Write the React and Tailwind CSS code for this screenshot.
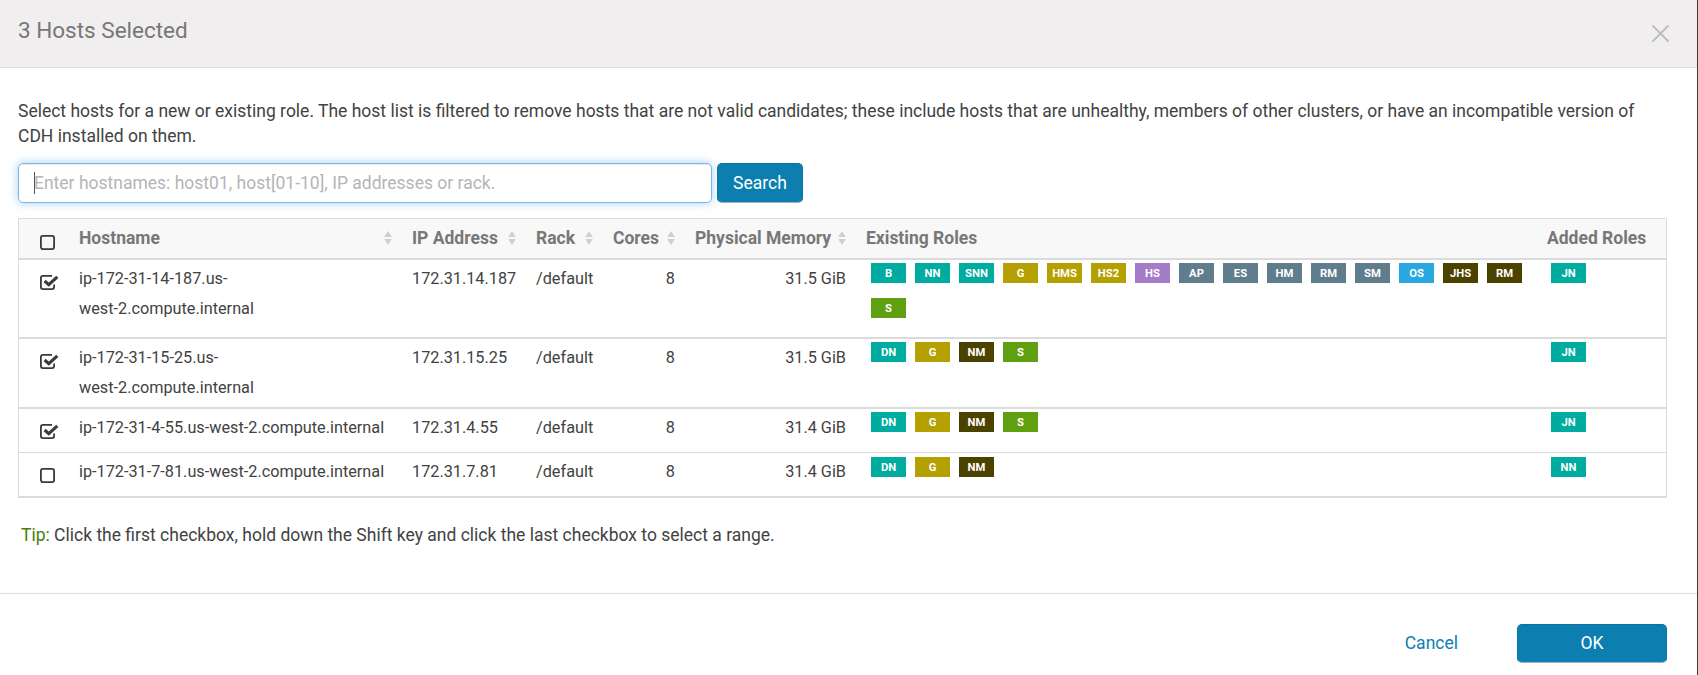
const TEAL = "bg-[#00ab9f]";
const GOLD = "bg-[#b4a000]";
const PURPLE = "bg-[#a57cc8]";
const SLATE = "bg-[#5f7d8c]";
const SKY = "bg-[#29a7e1]";
const OLIVE = "bg-[#4c4200]";
const GREEN = "bg-[#60a010]";

const worker = [["DN", TEAL], ["G", GOLD], ["NM", OLIVE]];

const hosts = [
  {
    checked: true,
    name: ["ip-172-31-14-187.us-", "west-2.compute.internal"],
    ip: "172.31.14.187",
    memory: "31.5 GiB",
    height: "h-[79px] border-b-2",
    existing: [
      ["B", TEAL], ["NN", TEAL], ["SNN", TEAL], ["G", GOLD], ["HMS", GOLD], ["HS2", GOLD],
      ["HS", PURPLE], ["AP", SLATE], ["ES", SLATE], ["HM", SLATE], ["RM", SLATE], ["SM", SLATE],
      ["OS", SKY], ["JHS", OLIVE], ["RM", OLIVE], ["S", GREEN],
    ],
    added: [["JN", TEAL]],
  },
  {
    checked: true,
    name: ["ip-172-31-15-25.us-", "west-2.compute.internal"],
    ip: "172.31.15.25",
    memory: "31.5 GiB",
    height: "h-[70px] border-b-2",
    existing: [...worker, ["S", GREEN]],
    added: [["JN", TEAL]],
  },
  {
    checked: true,
    name: ["ip-172-31-4-55.us-west-2.compute.internal"],
    ip: "172.31.4.55",
    memory: "31.4 GiB",
    height: "h-11 border-b",
    existing: [...worker, ["S", GREEN]],
    added: [["JN", TEAL]],
  },
  {
    checked: false,
    name: ["ip-172-31-7-81.us-west-2.compute.internal"],
    ip: "172.31.7.81",
    memory: "31.4 GiB",
    height: "h-[45px] border-b-2",
    badgeTop: "pt-1",
    existing: worker,
    added: [["NN", TEAL]],
  },
];

const columns =
  "grid grid-cols-[50px_333px_124px_77px_82px_171px_681px_129px] border-[#dbdbdb]";

function Checkbox({ checked }) {
  return (
    <svg width="20" height="16" viewBox="0 0 20 16" fill="none" stroke="#3a3a3a" role="checkbox" aria-checked={checked}>
      {checked ? (
        <>
          <path d="M13 0.9H3.9Q1.9 0.9 1.9 2.9V12.1Q1.9 14.1 3.9 14.1H13.1Q15.1 14.1 15.1 12.1V9.4" strokeWidth="1.8" />
          <path d="M5.6 6L9.8 9.7L18.3 1.8" strokeWidth="3.1" />
        </>
      ) : (
        <rect x="1.9" y="0.9" width="13.2" height="13.2" rx="2" strokeWidth="1.8" />
      )}
    </svg>
  );
}

function SortIcon() {
  return (
    <svg width="8" height="14" viewBox="0 0 8 14" fill="#cdd0d2" className="shrink-0">
      <path d="M4 0L7.8 6H0.2ZM4 14L0.2 8H7.8Z" />
    </svg>
  );
}

function HeaderCell({ children, sortable }) {
  return (
    <div className="flex items-center justify-between pr-[10px] pl-[10px] whitespace-nowrap">
      <span>{children}</span>
      {sortable && <SortIcon />}
    </div>
  );
}

function Badges({ roles, top, left }) {
  return (
    <div className={`flex flex-wrap content-start gap-x-[9px] gap-y-[15px] ${left} ${top}`}>
      {roles.map(([label, color], i) => (
        <span
          key={i}
          className={`flex h-5 w-[35px] items-center justify-center pt-px text-[11.25px] leading-5 font-bold text-white ${color}`}
        >
          {label}
        </span>
      ))}
    </div>
  );
}

function HostRow({ host }) {
  const top = host.badgeTop ?? "pt-[3px]";
  return (
    <div className={`${columns} ${host.height} text-[16.25px] leading-[30px]`}>
      <div className="pt-[15px] pl-5">
        <Checkbox checked={host.checked} />
      </div>
      <div className="pt-1 pl-[10px] whitespace-nowrap">
        {host.name.map((line) => (
          <div key={line}>{line}</div>
        ))}
      </div>
      <div className="pt-1 pl-[10px]">{host.ip}</div>
      <div className="pt-1 pl-[10px]">/default</div>
      <div className="pt-1 pr-[10px] text-right">8</div>
      <div className="pt-1 pr-[10px] text-right">{host.memory}</div>
      <Badges roles={host.existing} top={top} left="pl-[15px]" />
      <Badges roles={host.added} top={top} left="pl-[14px]" />
    </div>
  );
}

export default function App() {
  return (
    <div className="flex h-[675px] w-[1698px] flex-col overflow-hidden border-r border-[#3c3c3c] bg-white font-[Roboto,sans-serif] text-[17.5px] leading-[25px] text-[#424242]">
      <header className="flex h-[68px] shrink-0 justify-between border-b border-[#dbdbdb] bg-[#f0eeef] pr-7 pl-[18px]">
        <h1 className="pt-[15px] text-[22.5px] leading-[30px] text-[#777777]">3 Hosts Selected</h1>
        <button aria-label="Close" className="flex h-[66px] items-center">
          <svg width="17" height="17" viewBox="0 0 17 17" stroke="#bdbdbd" strokeWidth="1.8" strokeLinecap="round">
            <path d="M1 1L16 16M16 1L1 16" />
          </svg>
        </button>
      </header>

      <main className="flex h-[525px] shrink-0 flex-col px-[18px] pt-[31px]">
        <p className="h-16 w-[1649px]">
          Select hosts for a new or existing role. The host list is filtered to remove hosts that are not valid candidates;
          these include hosts that are unhealthy, members of other clusters, or have an incompatible version of CDH
          installed on them.
        </p>

        <div className="flex gap-[5px]">
          <div className="flex h-10 w-[694px] items-center rounded-[5px] border border-[#74b8ee] pl-[15px] text-[#b5b5b5] shadow-[inset_0_1px_1px_rgba(0,0,0,0.08),0_0_10px_rgba(102,175,233,0.6)]">
            <span className="h-[22px] w-px bg-[#555555]" />
            <span className="-ml-px">Enter hostnames: host01, host[01-10], IP addresses or rack.</span>
          </div>
          <button className="h-10 w-[86px] rounded-[5px] border border-[#0b75a0] border-b-[#9fb4bd] bg-[#0c7fb0] text-white">
            Search
          </button>
        </div>

        <div className="mt-[15px] w-[1649px] border-x border-t border-[#dbdbdb]">
          <div className={`${columns} h-[41px] border-b-2 bg-[#f8f8f8] pb-[1px] font-bold text-[#777777]`}>
            <div className="pt-4 pl-5">
              <Checkbox checked={false} />
            </div>
            <HeaderCell sortable>Hostname</HeaderCell>
            <HeaderCell sortable>IP Address</HeaderCell>
            <HeaderCell sortable>Rack</HeaderCell>
            <HeaderCell sortable>Cores</HeaderCell>
            <HeaderCell sortable>Physical Memory</HeaderCell>
            <HeaderCell>Existing Roles</HeaderCell>
            <HeaderCell>Added Roles</HeaderCell>
          </div>
          {hosts.map((host) => (
            <HostRow key={host.ip} host={host} />
          ))}
        </div>

        <p className="mt-[25px] pl-[3px]">
          <span className="text-[#43810b]">Tip:</span> Click the first checkbox, hold down the Shift key and click the last
          checkbox to select a range.
        </p>
      </main>

      <footer className="flex grow items-start justify-end border-t border-[#dbdbdb] pt-[30px] pr-[30px]">
        <button className="mr-[59px] h-[39px] text-[#0c7fb0]">Cancel</button>
        <button className="h-[39px] w-[150px] rounded-[5px] border border-[#0b75a0] border-b-[#9fb4bd] bg-[#0c7fb0] text-white">
          OK
        </button>
      </footer>
    </div>
  );
}
